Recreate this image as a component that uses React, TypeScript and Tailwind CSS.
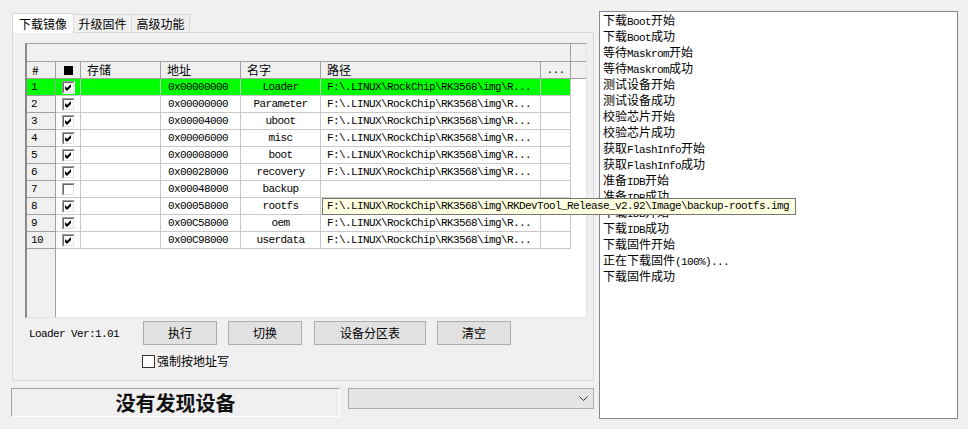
import React from 'react';

type Row = { addr: string; name: string; checked: boolean; path: boolean };

const rows: Row[] = [
  { addr: '0x00000000', name: 'Loader', checked: true, path: true },
  { addr: '0x00000000', name: 'Parameter', checked: true, path: true },
  { addr: '0x00004000', name: 'uboot', checked: true, path: true },
  { addr: '0x00006000', name: 'misc', checked: true, path: true },
  { addr: '0x00008000', name: 'boot', checked: true, path: true },
  { addr: '0x00028000', name: 'recovery', checked: true, path: true },
  { addr: '0x00048000', name: 'backup', checked: false, path: false },
  { addr: '0x00058000', name: 'rootfs', checked: true, path: true },
  { addr: '0x00C58000', name: 'oem', checked: true, path: true },
  { addr: '0x00C98000', name: 'userdata', checked: true, path: true },
];

const logLines = [
  '下载Boot开始',
  '下载Boot成功',
  '等待Maskrom开始',
  '等待Maskrom成功',
  '测试设备开始',
  '测试设备成功',
  '校验芯片开始',
  '校验芯片成功',
  '获取FlashInfo开始',
  '获取FlashInfo成功',
  '准备IDB开始',
  '准备IDB成功',
  '下载IDB开始',
  '下载IDB成功',
  '下载固件开始',
  '正在下载固件(100%)...',
  '下载固件成功',
];

const mono = "font-['Liberation_Mono',monospace] text-[11px] tracking-[-0.6px]";

// latin runs are narrow (half width), chinese stays 12px
const Mixed = ({ text }: { text: string }) => (
  <>
    {text
      .split(/([\x20-\x7e]+)/)
      .filter(Boolean)
      .map((part, i) =>
        /^[\x20-\x7e]+$/.test(part) ? (
          <span key={i} className={mono}>
            {part}
          </span>
        ) : (
          <span key={i}>{part}</span>
        )
      )}
  </>
);

const GridCheck = ({ checked }: { checked: boolean }) => (
  <span className="flex h-[13px] w-[13px] border border-t-[#a0a0a0] border-l-[#a0a0a0] border-b-white border-r-white">
    <span className="flex h-[11px] w-[11px] items-center justify-center border border-t-[#696969] border-l-[#696969] border-b-[#e3e3e3] border-r-[#e3e3e3] bg-white">
      {checked && (
        <svg width="7" height="7" viewBox="0 0 7 7">
          <path d="M0 2 L2 4 L6 0 L6 3 L2 7 L0 5 Z" fill="#000" />
        </svg>
      )}
    </span>
  </span>
);

const PATH = 'F:\\.LINUX\\RockChip\\RK3568\\img\\R...';
const FULL = 'F:\\.LINUX\\RockChip\\RK3568\\img\\RKDevTool_Release_v2.92\\Image\\backup-rootfs.img';

const Button = ({ label, w, ml }: { label: string; w: string; ml: string }) => (
  <button className={`${w} ${ml} h-[24px] border border-[#adadad] bg-[#e1e1e1] text-[12px] leading-[16px] text-black`}>
    {label}
  </button>
);

export default function App() {
  return (
    <div className="flex h-[429px] w-[968px] bg-[#f0f0f0] pl-[11px] pt-[11px] font-['Noto_Sans_CJK_SC',sans-serif] text-[12px] text-black">
      {/* left column */}
      <div className="flex w-[583px] flex-col">
        {/* tabs */}
        <div className="ml-[1px] mt-[1px] flex h-[20px] items-end">
          <div className="relative z-10 -mb-px flex h-[20px] w-[62px] items-center justify-center border border-b-0 border-[#d9d9d9] bg-white leading-[16px]">
            下载镜像
          </div>
          <div className="flex h-[18px] w-[58px] items-center justify-center border border-b-0 border-l-0 border-[#d9d9d9] leading-[16px]">
            升级固件
          </div>
          <div className="flex h-[18px] w-[58px] items-center justify-center border border-b-0 border-l-0 border-[#d9d9d9] leading-[16px]">
            高级功能
          </div>
        </div>

        {/* tab panel */}
        <div className="ml-[1px] flex h-[349px] w-[582px] flex-col border border-[#d9d9d9] pl-[12px] pt-[10px]">
          {/* grid */}
          <div className="relative flex h-[275px] w-[562px] flex-col border-t border-l-2 border-b border-r border-t-[#a0a0a0] border-l-[#8a8a8a] border-b-[#e3e3e3] border-r-[#e3e3e3] bg-white">
            <div className="flex h-[18px] border-b border-[#a0a0a0] bg-[#f0f0f0]">
              <div className="w-[544px] border-r border-[#a0a0a0]" />
            </div>
            <div className="flex h-[17px] bg-[#f0f0f0] leading-[16px]">
              <div className="w-[29px] border-r border-b border-[#a0a0a0] pl-[5px]">#</div>
              <div className="flex w-[25px] items-center justify-center border-r border-b border-[#a0a0a0]">
                <span className="h-[9px] w-[9px] bg-black" />
              </div>
              <div className="w-[80px] border-r border-b border-[#a0a0a0] pl-[6px]">存储</div>
              <div className="w-[80px] border-r border-b border-[#a0a0a0] pl-[6px]">地址</div>
              <div className="w-[80px] border-r border-b border-[#a0a0a0] pl-[6px]">名字</div>
              <div className="w-[220px] border-r border-b border-[#a0a0a0] pl-[6px]">路径</div>
              <div className={`w-[30px] border-r border-b border-[#a0a0a0] text-center ${mono}`}>...</div>
              <div className="flex-1 border-b border-[#a0a0a0]" />
            </div>
            {rows.map((r, i) => {
              const first = i === 0;
              const cell = first ? 'bg-[#00ff00]' : 'bg-white';
              return (
                <div key={i} className="flex h-[17px] leading-[16px]">
                  <div className={`w-[29px] border-r border-b border-[#a0a0a0] pl-[4px] ${mono} ${first ? 'bg-[#00ff00]' : 'bg-[#f0f0f0]'}`}>
                    {i + 1}
                  </div>
                  <div className={`flex w-[25px] items-start border-r border-b border-[#c8c8c8] pl-[6px] pt-[2px] ${cell}`}>
                    <GridCheck checked={r.checked} />
                  </div>
                  <div className={`w-[80px] border-r border-b border-[#c8c8c8] ${cell}`} />
                  <div className={`w-[80px] border-r border-b border-[#c8c8c8] pl-[7px] ${mono} ${cell}`}>{r.addr}</div>
                  <div className={`w-[80px] border-r border-b border-[#c8c8c8] text-center ${mono} ${cell}`}>{r.name}</div>
                  <div className={`relative w-[220px] border-r border-b border-[#c8c8c8] pl-[6px] ${mono} ${cell}`}>
                    {r.path ? PATH : ''}
                    {i === 7 && (
                      <div className="absolute left-[1px] top-0 z-20 h-[17px] w-[474px] border border-[#767676] bg-[#ffffe1] pl-[4px] leading-[15px] whitespace-nowrap">
                        {FULL}
                      </div>
                    )}
                  </div>
                  <div className={`w-[30px] border-r border-b border-[#c8c8c8] ${cell}`} />
                  <div className="flex-1 bg-white" />
                </div>
              );
            })}
            <div className="flex flex-1">
              <div className="w-[29px] border-r border-[#a0a0a0] bg-[#f0f0f0]" />
              <div className="flex-1 bg-white" />
            </div>
          </div>

          {/* buttons */}
          <div className="mt-[3px] flex h-[24px] items-center">
            <div className={`w-[118px] pl-[4px] pt-[3px] font-['Liberation_Mono',monospace] text-[11px] tracking-[-0.6px]`}>Loader Ver:1.01</div>
            <Button label="执行" w="w-[74px]" ml="ml-0" />
            <Button label="切换" w="w-[74px]" ml="ml-[11px]" />
            <Button label="设备分区表" w="w-[112px]" ml="ml-[12px]" />
            <Button label="清空" w="w-[74px]" ml="ml-[11px]" />
          </div>
          <div className="mt-[8px] flex items-center pl-[117px] leading-[16px]">
            <span className="h-[13px] w-[13px] border border-[#333333] bg-white" />
            <span className="ml-[2px]">强制按地址写</span>
          </div>
        </div>

        {/* status + combo */}
        <div className="mt-[7px] flex items-start">
          <div className="flex h-[29px] w-[329px] items-center justify-center border border-t-[#a0a0a0] border-l-[#a0a0a0] border-b-white border-r-white text-[20px] font-bold leading-[24px] text-[#111]">
            没有发现设备
          </div>
          <div className="ml-[8px] flex h-[21px] w-[246px] items-center justify-end border border-[#acacac] bg-[#e5e5e5] pr-[5px]">
            <svg width="9" height="5" viewBox="0 0 9 5">
              <path d="M0.5 0.5 L4.5 4.5 L8.5 0.5" stroke="#333" strokeWidth="1" fill="none" />
            </svg>
          </div>
        </div>
      </div>

      {/* log box */}
      <div className="ml-[5px] h-[408px] w-[359px] border border-[#828790] bg-white pl-[3px]">
        {logLines.map((l, i) => (
          <div key={i} className="h-[16px] whitespace-nowrap leading-[16px]">
            <Mixed text={l} />
          </div>
        ))}
      </div>
    </div>
  );
}
